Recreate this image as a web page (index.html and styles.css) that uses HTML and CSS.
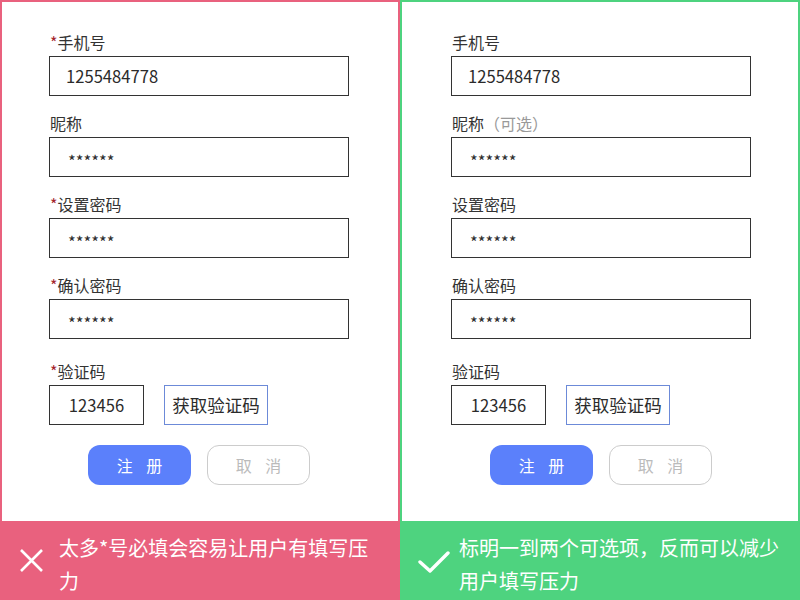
FILE: index.html
```html
<!DOCTYPE html>
<html lang="zh-CN">
<head>
  <meta charset="UTF-8" />
  <meta name="viewport" content="width=device-width, initial-scale=1.0" />
  <title>可选项标注对比</title>
  <link rel="stylesheet" href="styles.css">
</head>
<body>
  <div class="compare">
    <!-- 反例：全部标星 -->
    <section class="panel panel-bad">
      <div class="form">
        <div class="field">
          <div class="label"><span class="req">*</span>手机号</div>
          <div class="input">1255484778</div>
        </div>
        <div class="field">
          <div class="label">昵称</div>
          <div class="input"><span class="mask">******</span></div>
        </div>
        <div class="field">
          <div class="label"><span class="req">*</span>设置密码</div>
          <div class="input"><span class="mask">******</span></div>
        </div>
        <div class="field">
          <div class="label"><span class="req">*</span>确认密码</div>
          <div class="input"><span class="mask">******</span></div>
        </div>
        <div class="field field-code">
          <div class="label"><span class="req">*</span>验证码</div>
          <div class="code-row">
            <div class="input input-code">123456</div>
            <div class="btn-code">获取验证码</div>
          </div>
        </div>
        <div class="actions">
          <div class="btn btn-primary">注 册</div>
          <div class="btn btn-ghost">取 消</div>
        </div>
      </div>
      <div class="note">
        <svg class="note-icon" width="32" height="32" viewBox="0 0 32 32">
          <path d="M3 5 L24 26 M24 5 L3 26" stroke="#fff" stroke-width="2.6" fill="none" />
        </svg>
        <p>太多*号必填会容易让用户有填写压<br>力</p>
      </div>
    </section>

    <!-- 正例：只标可选 -->
    <section class="panel panel-good">
      <div class="form">
        <div class="field">
          <div class="label">手机号</div>
          <div class="input">1255484778</div>
        </div>
        <div class="field">
          <div class="label">昵称<span class="optional">（可选）</span></div>
          <div class="input"><span class="mask">******</span></div>
        </div>
        <div class="field">
          <div class="label">设置密码</div>
          <div class="input"><span class="mask">******</span></div>
        </div>
        <div class="field">
          <div class="label">确认密码</div>
          <div class="input"><span class="mask">******</span></div>
        </div>
        <div class="field field-code">
          <div class="label">验证码</div>
          <div class="code-row">
            <div class="input input-code">123456</div>
            <div class="btn-code">获取验证码</div>
          </div>
        </div>
        <div class="actions">
          <div class="btn btn-primary">注 册</div>
          <div class="btn btn-ghost">取 消</div>
        </div>
      </div>
      <div class="note">
        <svg class="note-icon" width="32" height="32" viewBox="0 0 32 32">
          <path d="M2 17 L12 26 L30 8" stroke="#fff" stroke-width="3.4" fill="none" stroke-linecap="round" stroke-linejoin="round" />
        </svg>
        <p>标明一到两个可选项，反而可以减少用户填写压力</p>
      </div>
    </section>
  </div>
</body>
</html>
```

FILE: styles.css
```css
body {
  margin: 0;
  font-family: "Noto Sans CJK SC", "Noto Sans", sans-serif;
  color: #333;
  background: #fff;
}
.compare {
  display: flex;
  width: 800px;
  height: 600px;
}
.panel {
  width: 400px;
  height: 600px;
  box-sizing: border-box;
  padding: 2px 2px 0;
  display: flex;
  flex-direction: column;
}
.panel-bad {
  background-color: #e9617e;
}
.panel-good {
  background-color: #4ed37f;
}
.form {
  height: 519px;
  background: #fff;
  padding: 31px 0 0 47px;
  box-sizing: border-box;
}
.panel-good .form {
  padding-left: 49px;
}
.field {
  width: 300px;
  margin-bottom: 18px;
}
.field-code {
  margin-top: 23px;
  margin-bottom: 0;
}
.label {
  font-size: 16px;
  line-height: 18px;
  height: 18px;
  margin: 0 0 5px 1px;
  color: #333;
}
.req {
  color: #a3242c;
}
.optional {
  color: #999;
}
.input {
  height: 40px;
  box-sizing: border-box;
  border: 1px solid #333;
  padding-left: 16px;
  font-size: 16.6px;
  line-height: 38px;
  color: #2b2b2b;
}
.mask {
  display: inline-block;
  padding-left: 2px;
  vertical-align: -4px;
}
.code-row {
  display: flex;
  gap: 20px;
}
.input-code {
  width: 95px;
  padding-left: 0;
  text-align: center;
}
.btn-code {
  width: 104px;
  height: 40px;
  box-sizing: border-box;
  border: 1px solid #6c8ad8;
  font-size: 17.5px;
  line-height: 38px;
  text-align: center;
  color: #2b2b2b;
}
.actions {
  width: 300px;
  display: flex;
  justify-content: center;
  gap: 16px;
  margin-top: 20px;
}
.btn {
  width: 103px;
  height: 40px;
  box-sizing: border-box;
  border-radius: 12px;
  font-size: 16px;
  line-height: 40px;
  text-align: center;
  letter-spacing: 5px;
  text-indent: 5px;
}
.btn-primary {
  background-color: #5b80fb;
  color: #fff;
}
.btn-ghost {
  border: 1px solid #ccc;
  line-height: 38px;
  color: #bbb;
}
.note {
  flex: 1;
  display: flex;
  align-items: center;
  padding-left: 16px;
  color: #fff;
}
.note-icon {
  flex-shrink: 0;
  margin-right: 9px;
}
.note p {
  margin: 0;
  padding-top: 6px;
  width: 322px;
  font-size: 20px;
  line-height: 33px;
}
```
